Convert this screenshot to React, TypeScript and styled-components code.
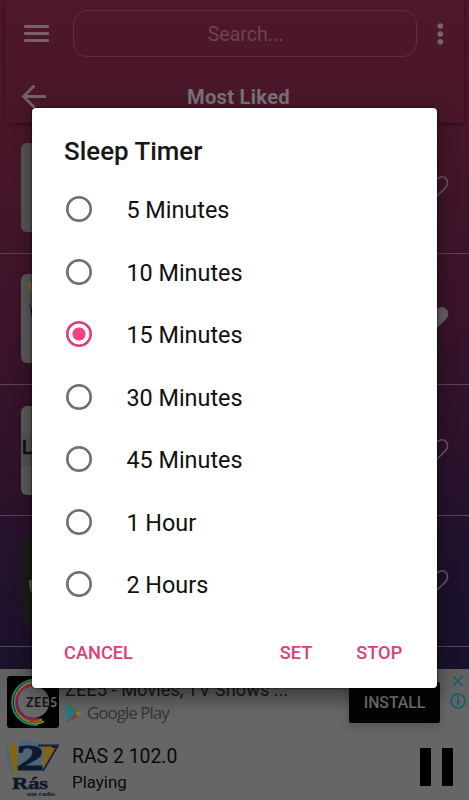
import React, { useState } from "react";
import styled, { createGlobalStyle } from "styled-components";

const GlobalStyle = createGlobalStyle`
  * { box-sizing: border-box; }
  body { margin: 0; font-family: Roboto, sans-serif; background: #666; }
  button { font-family: inherit; border: 0; padding: 0; background: none; cursor: pointer; }
`;

const Screen = styled.main`
  position: relative;
  width: 469px;
  height: 800px;
  overflow: hidden;
  display: flex;
  flex-direction: column;
`;

const Station = styled.section`
  height: 669px;
  flex: none;
  overflow: hidden;
  background: linear-gradient(174deg, #4c172a 0%, #491629 20%, #3c1329 45%, #2e122b 67%, #20122b 82%, #18112b 100%);
`;

const Header = styled.header`
  height: 122.6px;
  margin: 0 5px;
  background: linear-gradient(#4f182a, #481629);
  box-shadow: 0 1px 4px rgba(15, 0, 12, 0.55);
`;

const SearchRow = styled.div`
  height: 84px;
  padding: 10px 13px 0 19px;
  display: flex;
  align-items: flex-start;
`;

const MenuIcon = styled.svg`
  width: 25px;
  height: 18px;
  margin-top: 14px;
  flex: none;
`;

const SearchBox = styled.div`
  width: 344px;
  height: 47px;
  margin-left: 24px;
  flex: none;
  border: 1px solid #632e40;
  border-radius: 14px;
  display: flex;
  align-items: center;
  justify-content: center;
  font-size: 19.6px;
  color: #6e4351;
  padding: 2px 0 0 1px;
`;

const MoreIcon = styled.svg`
  width: 8px;
  height: 24px;
  margin: 12px 0 0 19px;
  flex: none;
`;

const TitleRow = styled.div`
  height: 38px;
  display: grid;
  grid-template-columns: 26px 1fr 34px;
  padding-left: 16px;
  border-top: 1px solid #431425;
`;

const BackIcon = styled.svg`
  width: 26px;
  height: 24px;
`;

const PageTitle = styled.h1`
  margin: -1px 0 0;
  font-size: 20.2px;
  line-height: 26px;
  font-weight: 700;
  letter-spacing: 0.25px;
  color: #777074;
  text-align: center;
`;

const StationRow = styled.div`
  height: 131.2px;
  padding: 20.6px 20px 0 21px;
  display: flex;
  justify-content: space-between;
  border-bottom: 1px solid #5a4653;
`;

const Thumb = styled.svg`
  width: 89px;
  height: 89px;
  border-radius: 6px;
`;

const Heart = styled.svg`
  width: 26px;
  height: 24px;
  margin-top: 32px;
`;

const Ad = styled.aside`
  height: 66px;
  flex: none;
  display: flex;
  align-items: flex-start;
  background: linear-gradient(#606060, #666 70%);
`;

const AdLogo = styled.svg`
  width: 52px;
  height: 52px;
  margin: 7px 0 0 7px;
  flex: none;
`;

const AdCopy = styled.div`
  width: 284px;
  margin: 10px 0 0 6px;
  flex: none;
`;

const AdTitle = styled.div`
  font-size: 18.3px;
  line-height: 22px;
  color: #171717;
  white-space: nowrap;
`;

const StoreLine = styled.div`
  display: flex;
  align-items: center;
  gap: 5px;
  margin-top: 1px;
  padding-left: 1px;
  height: 22px;
  font: 17px/22px "Open Sans", sans-serif;
  letter-spacing: -1px;
  color: #343434;
`;

const InstallButton = styled.button`
  width: 91px;
  height: 41px;
  margin-top: 13px;
  border-radius: 2px;
  background: #030303;
  color: #727272;
  font-size: 15.8px;
  font-weight: 500;
  box-shadow: 0 4px 8px rgba(65, 65, 80, 0.45);
`;

const AdControls = styled.svg`
  width: 18px;
  height: 40px;
  margin: 3px 0 0 9px;
`;

const Player = styled.footer`
  height: 65px;
  flex: none;
  display: flex;
  align-items: flex-start;
  background: #666;
`;

const StationLogo = styled.svg`
  width: 58px;
  height: 62px;
  margin: 3px 0 0 4px;
`;

const NowPlaying = styled.div`
  flex: 1;
  margin: 8px 0 0 10px;
  color: #090909;
`;

const TrackName = styled.div`
  font-size: 19.4px;
  line-height: 27px;
`;

const Status = styled.div`
  font-size: 16.9px;
  line-height: 25px;
`;

const PauseIcon = styled.svg`
  width: 33px;
  height: 38px;
  margin: 13px 16px 0 0;
`;

const Overlay = styled.div`
  position: absolute;
  inset: 0;
  padding: 108px 32px 0;
`;

const Dialog = styled.section`
  width: 404.5px;
  height: 580px;
  padding: 27px 24px 0 32px;
  background: #fff;
  border-radius: 4px;
  box-shadow: 0 0 2px #000, 0 8px 20px rgba(0, 0, 0, 0.45);
`;

const DialogTitle = styled.h2`
  margin: 0;
  font-size: 25.9px;
  line-height: 32px;
  font-weight: 500;
  color: #171717;
`;

const Options = styled.div`
  margin-top: 11px;
`;

const Option = styled.label`
  height: 62.5px;
  display: flex;
  align-items: center;
  gap: 34px;
  padding-left: 2.4px;
  font-size: 23.4px;
  color: #101010;
  cursor: pointer;
`;

const Radio = styled.input`
  appearance: none;
  width: 26px;
  height: 26px;
  margin: 0;
  flex: none;
  border-radius: 50%;
  background: radial-gradient(circle, transparent 10.1px, #707070 10.7px);
  &:checked {
    background: radial-gradient(circle, #fb4083 6.2px, transparent 6.9px 10.1px, #e13e7e 10.7px);
  }
`;

const OptionText = styled.span`
  padding-top: 2px;
`;

const Actions = styled.div`
  display: flex;
  align-items: center;
  height: 75px;
`;

const Action = styled.button<{ $push?: boolean }>`
  width: ${(p) => (p.$push ? "69px" : "auto")};
  margin-right: ${(p) => (p.$push ? "146.7px" : "44px")};
  color: #dc3d7c;
  font-size: 18.2px;
  font-weight: 500;
  line-height: 30px;
  white-space: nowrap;
  &:last-child { margin-right: 0; }
`;

const heartPath =
  "M13 22 3.8 13.1C.6 10 .8 5.8 3.2 3.4 6 .7 10.4 1.5 13 5c2.6-3.5 7-4.3 9.8-1.6 2.4 2.4 2.6 6.6-.6 9.7Z";

const thumbs = [
  <rect key="a" width="89" height="89" fill="#575757" />,
  <g key="b">
    <rect width="89" height="89" fill="#5b5b5b" />
    <path d="M6 9h35L24 48Z" fill="#8a6714" />
    <path d="M8 28 20 60H14Z" fill="#101c35" />
  </g>,
  <g key="c">
    <rect width="89" height="89" fill="#5c5c5c" />
    <rect y="27" width="89" height="33" fill="#535456" />
    <path d="M3.5 34v13h20" fill="none" stroke="#09111b" strokeWidth="2.6" />
  </g>,
  <g key="d">
    <rect width="89" height="89" fill="#1b1b1c" />
    <path d="M8 43h26v16H14q-6-2-6-16" fill="#5a5a5a" />
  </g>,
];

const times = ["5 Minutes", "10 Minutes", "15 Minutes", "30 Minutes", "45 Minutes", "1 Hour", "2 Hours"];

export default function App() {
  const [selected, setSelected] = useState(2);
  return (
    <>
      <GlobalStyle />
      <Screen>
        <Station>
          <Header>
            <SearchRow>
              <MenuIcon viewBox="0 0 25 18">
                <path d="M1.3 2.5h22.4M1.3 9.5h22.4M1.3 16.5h22.4" stroke="#78616b" strokeWidth="2.8" strokeLinecap="round" />
              </MenuIcon>
              <SearchBox>Search...</SearchBox>
              <MoreIcon viewBox="0 0 8 24">
                {[4, 12, 19.7].map((y) => <circle key={y} cx="4.3" cy={y} r="2.8" fill="#79646d" />)}
              </MoreIcon>
            </SearchRow>
            <TitleRow>
              <BackIcon viewBox="0 0 26 24">
                <path d="M25 11.5H3M13.5 .5 2.5 11.5l11 11" fill="none" stroke="#766169" strokeWidth="2.8" />
              </BackIcon>
              <PageTitle>Most Liked</PageTitle>
            </TitleRow>
          </Header>
          {thumbs.map((art, i) => (
            <StationRow key={i}>
              <Thumb viewBox="0 0 89 89">{art}</Thumb>
              <Heart viewBox="0 0 26 24">
                <path d={heartPath} fill={i === 1 ? "#666166" : "none"} stroke="#665862" strokeWidth="1.6" />
              </Heart>
            </StationRow>
          ))}
        </Station>
        <Ad>
          <AdLogo viewBox="0 0 52 52">
            <rect width="52" height="52" rx="3" fill="#020202" />
            <g fill="none" strokeWidth="2">
              <path d="M31 4A22.5 22.5 0 1 0 31 48.5" stroke="#168777" />
              <path d="M36 7A20.8 20.8 0 1 0 37 45.5" stroke="#6c872a" />
              <path d="M32 7A19.2 19.2 0 1 0 35 43.5" stroke="#b17920" />
              <path d="M31 9A17.8 17.8 0 1 0 33 43" stroke="#a62d27" />
              <path d="M27 10A16.5 16.5 0 1 0 30 42.5" stroke="#792567" />
            </g>
            <circle cx="26.5" cy="26" r="15.8" fill="#696969" />
            <text x="19" y="31" fontSize="12.5" fontWeight="700" fontFamily="Lato, sans-serif" fill="#171717" textLength="23">ZEE</text>
            <text x="43" y="31" fontSize="12.5" fontWeight="700" fontFamily="Lato, sans-serif" fill="#777">5</text>
          </AdLogo>
          <AdCopy>
            <AdTitle>ZEE5 - Movies, TV Shows ...</AdTitle>
            <StoreLine>
              <svg width="16" height="19" viewBox="0 0 16 19">
                <path d="M0 0v19L9 9.5Z" fill="#237b89" />
                <path d="m0 0 12 7-3 2.5Z" fill="#247c5a" />
                <path d="m12 7 4 2.5-4 2.5-3-2.5Z" fill="#8f7827" />
                <path d="m0 19 12-7-3-2.5Z" fill="#843c42" />
              </svg>
              Google Play
            </StoreLine>
          </AdCopy>
          <InstallButton>INSTALL</InstallButton>
          <AdControls viewBox="0 0 18 40" fill="none" stroke="#125d70" strokeWidth="1.5">
            <path d="m4 4 10 10M14 4 4 14" />
            <circle cx="9" cy="29" r="7" />
            <path d="M9 27v6M9 23.8v2" strokeWidth="2" />
          </AdControls>
        </Ad>
        <Player>
          <StationLogo viewBox="0 0 58 62">
            <path d="m2 8 10-2 3 27-9 2Z" fill="#806515" />
            <path d="m16 1 23 4-2 27-24-3Z" fill="#4e6578" />
            <path d="M39 8h14L40 31Z" fill="#806515" />
            <path d="M34 7.5h20L39 33M48 9h6" fill="none" stroke="#142136" strokeWidth="1.8" />
            <path d="m1 6 3-.5 5 29-3 .5Z" fill="#4e6578" />
            <text x="12" y="32" fontFamily="Liberation Serif" fontSize="35" fontWeight="700" fill="#0d192c" stroke="#0d192c" strokeWidth="1" textLength="28" lengthAdjust="spacingAndGlyphs">2</text>
            <text x="8" y="51" fontFamily="Liberation Serif" fontSize="16" fontWeight="700" fill="#101829" stroke="#101829" strokeWidth=".5" textLength="36" lengthAdjust="spacingAndGlyphs">Rás</text>
            <text x="23" y="58" fontFamily="Liberation Serif" fontSize="6" fontWeight="700" fill="#121a28" textLength="28" lengthAdjust="spacingAndGlyphs">um radio</text>
          </StationLogo>
          <NowPlaying>
            <TrackName>RAS 2 102.0</TrackName>
            <Status>Playing</Status>
          </NowPlaying>
          <PauseIcon viewBox="0 0 33 38"><path d="M0 0h11v38H0zM22 0h11v38H22z" /></PauseIcon>
        </Player>
        <Overlay>
          <Dialog role="dialog" aria-label="Sleep Timer">
            <DialogTitle>Sleep Timer</DialogTitle>
            <Options>
              {times.map((t, i) => (
                <Option key={t}>
                  <Radio type="radio" name="time" checked={selected === i} onChange={() => setSelected(i)} />
                  <OptionText>{t}</OptionText>
                </Option>
              ))}
            </Options>
            <Actions>
              <Action $push>CANCEL</Action>
              <Action>SET</Action>
              <Action>STOP</Action>
            </Actions>
          </Dialog>
        </Overlay>
      </Screen>
    </>
  );
}
